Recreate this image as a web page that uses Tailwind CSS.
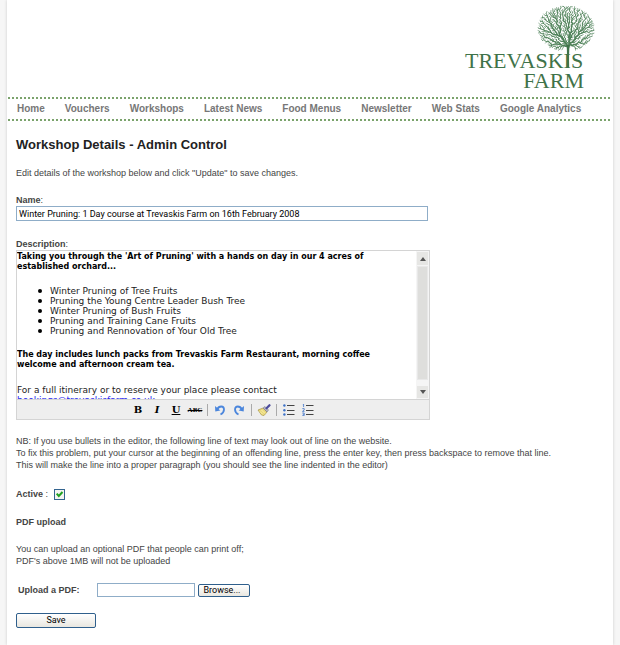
<!DOCTYPE html>
<html lang="en">
<head>
<meta charset="utf-8">
<meta name="viewport" content="width=device-width, initial-scale=1">
<title>Workshop Details - Admin Control</title>
<script src="https://cdn.jsdelivr.net/npm/@tailwindcss/browser@4"></script>
</head>
<body class="bg-[#f6f6f6] px-[7px] font-['Liberation_Sans',Arial,sans-serif] text-[9px] leading-3 text-[#444]">
<div class="min-h-screen bg-white shadow-[0_0_3px_#ccc]">
  <header class="px-px">
    <div class="flex justify-end pt-1 pr-4">
      <a href="#" aria-label="Trevaskis Farm">
        <svg width="136" height="93" viewBox="0 0 136 93" class="block">
          <g id="tree" fill="none" stroke="#4f8259" stroke-linecap="round"></g>
          <path d="M106.600 41 Q107.300 50 106.800 64 L109.200 64 Q108.800 50 109.600 41 Z" fill="#3f7349"/>
          <g fill="#3f7349" font-family="'Liberation Serif', serif" font-size="22">
            <text x="5" y="64">TREVASKIS</text>
            <text x="124" y="84" text-anchor="end">FARM</text>
          </g>
        </svg>
      </a>
    </div>
    <div class="h-0.5 bg-[repeating-linear-gradient(90deg,#7ba36c_0_2px,transparent_2px_4px)]"></div>
    <nav class="flex gap-5 px-[9px] py-[3px] text-[10px] leading-[14px] font-bold text-[#777]">
      <a href="#">Home</a>
      <a href="#">Vouchers</a>
      <a href="#">Workshops</a>
      <a href="#">Latest News</a>
      <a href="#">Food Menus</a>
      <a href="#">Newsletter</a>
      <a href="#">Web Stats</a>
      <a href="#">Google Analytics</a>
    </nav>
    <div class="h-0.5 bg-[repeating-linear-gradient(90deg,#7ba36c_0_2px,transparent_2px_4px)]"></div>
  </header>

  <main class="px-[9px] pt-4">
    <h1 class="text-[13px] leading-4 font-bold text-[#222]">Workshop Details - Admin Control</h1>
    <p class="mt-[14px]">Edit details of the workshop below and click "Update" to save changes.</p>

    <form class="mt-[15px]">
      <label for="name" class="block"><b>Name</b>:</label>
      <input id="name" type="text" value="Winter Pruning: 1 Day course at Trevaskis Farm on 16th February 2008" class="block h-[15px] w-full max-w-[412px] border border-[#8fadc8] bg-white px-0.5 font-[Roboto,sans-serif] text-black">

      <div id="desc-label" class="mt-[17px]"><b>Description</b>:</div>
      <div class="max-w-[414px] border border-[#d4d4d4] bg-[#eee]">
        <div class="flex h-[148px] bg-white">
          <div contenteditable="true" role="textbox" aria-multiline="true" aria-labelledby="desc-label" class="min-w-0 flex-1 overflow-hidden pt-px pr-6 font-['DejaVu_Sans',Verdana,sans-serif] text-[9px] leading-[10px] text-[#222]">
            <p class="text-[8px] font-bold text-black">Taking you through the 'Art of Pruning' with a hands on day in our 4 acres of established orchard...</p>
            <ul class="my-[14px] pl-[21px]">
              <li class="flex items-center gap-2 before:size-1 before:rounded-full before:bg-black">Winter Pruning of Tree Fruits</li>
              <li class="flex items-center gap-2 before:size-1 before:rounded-full before:bg-black">Pruning the Young Centre Leader Bush Tree</li>
              <li class="flex items-center gap-2 before:size-1 before:rounded-full before:bg-black">Winter Pruning of Bush Fruits</li>
              <li class="flex items-center gap-2 before:size-1 before:rounded-full before:bg-black">Pruning and Training Cane Fruits</li>
              <li class="flex items-center gap-2 before:size-1 before:rounded-full before:bg-black">Pruning and Rennovation of Your Old Tree</li>
            </ul>
            <p class="text-[8px] font-bold text-black">The day includes lunch packs from Trevaskis Farm Restaurant, morning coffee welcome and afternoon cream tea.</p>
            <p class="mt-[15px]">For a full itinerary or to reserve your place please contact<br><a href="#" class="text-[#22e] underline">bookings@trevaskisfarm.co.uk</a></p>
          </div>
          <div class="flex w-[13px] flex-col bg-[#f5f5f5] p-px" aria-hidden="true">
            <div class="flex h-[13px] items-center justify-center bg-[#e6e6e4]"><svg width="6" height="4"><path d="M3 0 6 4H0Z" fill="#555"/></svg></div>
            <div class="mt-px mb-1.5 flex-1 border border-[#e8e8e8] bg-[#dededc]"></div>
            <div class="flex h-3 items-center justify-center bg-[#e6e6e4]"><svg width="6" height="4"><path d="M3 4 6 0H0Z" fill="#555"/></svg></div>
          </div>
        </div>
        <div role="toolbar" aria-label="Formatting" class="flex h-5 items-center justify-center border-t border-[#d4d4d4] font-['DejaVu_Serif',serif] text-[10px] leading-3 font-bold text-black">
          <button type="button" aria-label="Bold" class="w-[19px]">B</button>
          <button type="button" aria-label="Italic" class="w-[19px] italic">I</button>
          <button type="button" aria-label="Underline" class="w-[19px] underline">U</button>
          <button type="button" aria-label="Strikethrough" class="w-[19px] font-['Liberation_Serif',serif] text-[7px] line-through">ABC</button>
          <span class="mx-0.5 h-3 w-0.5 border-l border-[#aaa]"></span>
          <button type="button" aria-label="Undo" class="flex w-[19px] justify-center"><svg width="12" height="12" viewBox="0 0 12 12"><path d="M3 5.500C5 1.500 10 1.500 10 5.500 10 8 8.500 9.500 6.500 10.500" fill="none" stroke="#4b86dc" stroke-width="1.800"/><path d="M1 2 1.300 7.500 6.300 6.500Z" fill="#4b86dc"/></svg></button>
          <button type="button" aria-label="Redo" class="flex w-[19px] justify-center"><svg width="12" height="12" viewBox="0 0 12 12"><path d="M9 5.500C7 1.500 2 1.500 2 5.500 2 8 3.500 9.500 5.500 10.500" fill="none" stroke="#4b86dc" stroke-width="1.800"/><path d="M11 2 10.700 7.500 5.700 6.500Z" fill="#4b86dc"/></svg></button>
          <span class="mx-0.5 h-3 w-0.5 border-l border-[#aaa]"></span>
          <button type="button" aria-label="Clean up formatting" class="flex w-[19px] justify-center"><svg width="14" height="12" viewBox="0 0 14 12"><path d="M1 6 6 4 10 8 7 11.500 4.500 11Z" fill="#e8d77a" stroke="#a89545" stroke-width=".7"/><path d="M3 7.500 6 10.500M4.500 6 8 9.500" stroke="#fff6b8" stroke-width=".8"/><path d="M6 4 8 2.500 11.500 6 10 8Z" fill="#b7b7c2" stroke="#77778a" stroke-width=".6"/><path d="M9.500 4.300 12.500 1.200" stroke="#4c4c9c" stroke-width="2.200" stroke-linecap="round"/></svg></button>
          <span class="mx-0.5 h-3 w-0.5 border-l border-[#aaa]"></span>
          <button type="button" aria-label="Bulleted list" class="flex w-[19px] justify-center"><svg width="12" height="12" viewBox="0 0 12 12"><path d="M4 1.500H11.500M4 6.500H11.500M4 10.500H11.500" stroke="#444"/><g fill="#3f73c8"><circle cx="1.400" cy="1.500" r="1.200"/><circle cx="1.400" cy="6.300" r="1.200"/><circle cx="1.400" cy="10.500" r="1.200"/></g></svg></button>
          <button type="button" aria-label="Numbered list" class="flex w-[19px] justify-center"><svg width="12" height="12" viewBox="0 0 12 12"><path d="M4 1.500H11.500M4 6.500H11.500M4 10.500H11.500" stroke="#444"/><path d="M.8.6 1.600 0V3M.3 4.600H2.200V6L.5 7.400H2.500M.3 9H2.200V11.600H.3M.8 10.300H2.200" fill="none" stroke="#3f73c8" stroke-width=".8"/></svg></button>
        </div>
      </div>

      <p class="mt-[15px]">NB: If you use bullets in the editor, the following line of text may look out of line on the website.<br>To fix this problem, put your cursor at the beginning of an offending line, press the enter key, then press backspace to remove that line.<br>This will make the line into a proper paragraph (you should see the line indented in the editor)</p>

      <div class="mt-[17px] flex items-center gap-1.5">
        <label for="active"><b>Active</b> :</label>
        <span class="relative flex">
          <input id="active" type="checkbox" checked class="size-[11px] appearance-none border border-[#33648f] bg-[#f4f4f2]">
          <svg class="pointer-events-none absolute inset-0" width="11" height="11" viewBox="0 0 11 11"><path d="M2.700 4.600 4.800 7 8.500 3" fill="none" stroke="#21a121" stroke-width="2"/></svg>
        </span>
      </div>

      <h2 class="mt-4 font-bold">PDF upload</h2>
      <p class="mt-[15px]">You can upload an optional PDF that people can print off;<br>PDF's above 1MB will not be uploaded</p>

      <div class="mt-4 flex items-center pl-0.5">
        <label for="pdf" class="w-[79px] font-bold">Upload a PDF:</label>
        <input id="pdf" type="text" class="h-3.5 w-[98px] border border-[#8fadc8] bg-white px-0.5 text-black">
        <button type="button" class="ml-[3px] h-[13px] w-[52px] rounded-xs border border-[#2f5f8c] bg-linear-to-b from-white to-[#e9e7e0] pr-1 font-[Roboto,sans-serif] leading-[11px] text-black">Browse...</button>
      </div>
      <button type="submit" class="mt-4 block h-[15px] w-20 rounded-xs border border-[#2f5f8c] bg-linear-to-b from-white to-[#e9e7e0] font-[Roboto,sans-serif] leading-[13px] text-black">Save</button>
    </form>
  </main>
</div>

<script>
// Grows the bare winter tree of the logo: twigs fill an oval crown and join towards the trunk.
(function () {
  var seed = 11;
  function rnd() { seed = (seed * 16807) % 2147483647; return seed / 2147483647; }
  var cx = 106, cy = 24.5, rx = 28, ry = 22.5, root = { x: 108, y: 43, len: 0, kids: 0, parent: null };
  var pts = [];
  for (var i = 0; i < 12000 && pts.length < 620; i++) {
    var x = cx + (rnd() * 2 - 1) * rx, y = cy + (rnd() * 2 - 1) * ry;
    var e = Math.pow((x - cx) / rx, 2) + Math.pow((y - cy) / ry, 2);
    if (e > 0.86 + rnd() * 0.2) continue;
    if (y > 43 && Math.abs(x - root.x) < 6) continue;
    if (pts.some(function (p) { return Math.hypot(p.x - x, p.y - y) < 1.4; })) continue;
    pts.push({ x: x, y: y, d: Math.hypot(x - root.x, y - root.y), kids: 0 });
  }
  pts.sort(function (a, b) { return a.d - b.d; });
  var nodes = [root];
  pts.forEach(function (p) {
    var best = null, cost = 1e9;
    nodes.forEach(function (n) {
      var d = Math.hypot(p.x - n.x, p.y - n.y), c = d * 2 + n.len * 0.7;
      if (d > 0 && c < cost) { cost = c; best = n; }
    });
    p.parent = best;
    p.len = best.len + Math.hypot(p.x - best.x, p.y - best.y);
    nodes.push(p);
  });
  for (var k = nodes.length - 1; k > 0; k--) nodes[k].parent.kids += nodes[k].kids + 1;
  var g = document.getElementById('tree');
  nodes.slice(1).forEach(function (n) {
    var l = document.createElementNS('http://www.w3.org/2000/svg', 'line');
    l.setAttribute('x1', n.parent.x); l.setAttribute('y1', n.parent.y);
    l.setAttribute('x2', n.x); l.setAttribute('y2', n.y);
    l.setAttribute('stroke-width', Math.min(2, 0.65 + Math.sqrt(n.kids) * 0.1));
    g.appendChild(l);
  });
})();
</script>
</body>
</html>
